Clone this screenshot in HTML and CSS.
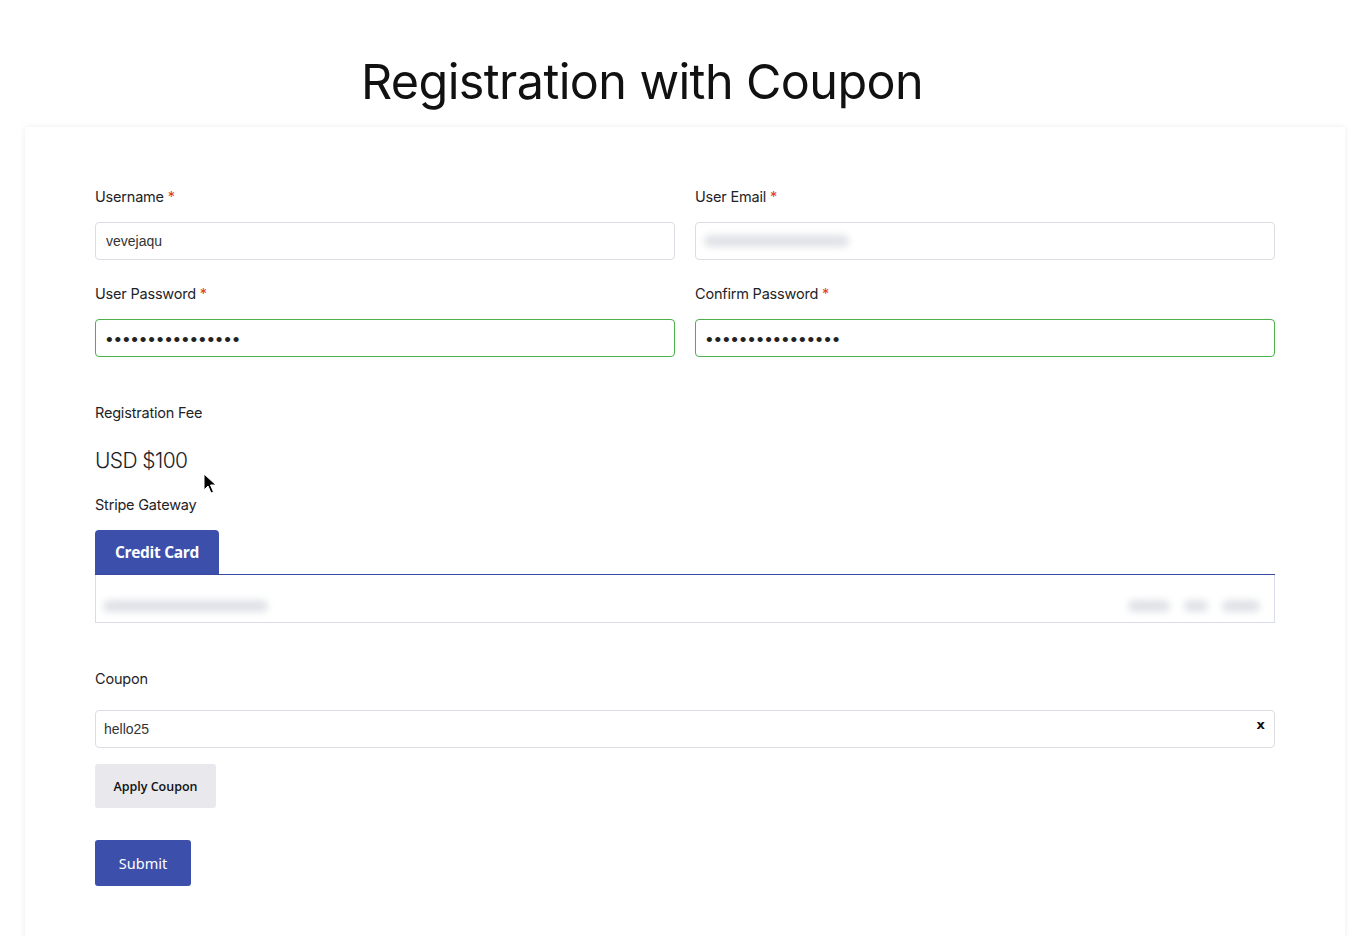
FILE: index.html
```html
<!DOCTYPE html>
<html lang="en">
<head>
  <meta charset="UTF-8">
  <meta name="viewport" content="width=device-width, initial-scale=1.0">
  <title>Registration with Coupon</title>
  <link rel="stylesheet" href="styles.css">
</head>
<body>
  <h1 class="page-title">Registration with Coupon</h1>

  <div class="card">
    <form class="reg-form">
      <div class="row">
        <div class="field">
          <label>Username <span class="req">*</span></label>
          <input type="text" class="input" value="vevejaqu">
        </div>
        <div class="field">
          <label>User Email <span class="req">*</span></label>
          <div class="input blurred-input"><span class="blur blur-email"></span></div>
        </div>
      </div>

      <div class="row">
        <div class="field">
          <label>User Password <span class="req">*</span></label>
          <input type="password" class="input valid" value="passwordpassword">
        </div>
        <div class="field">
          <label>Confirm Password <span class="req">*</span></label>
          <input type="password" class="input valid" value="passwordpassword">
        </div>
      </div>

      <!-- Fee -->
      <div class="fee">
        <div class="fee-label">Registration Fee</div>
        <div class="fee-amount">USD $100</div>
        <div class="gateway-label">Stripe Gateway</div>
      </div>

      <div class="tabs">
        <button type="button" class="tab active">Credit Card</button>
      </div>
      <div class="card-element">
        <span class="blur blur-number"></span>
        <span class="spacer"></span>
        <span class="blur blur-exp"></span>
        <span class="blur blur-cvc"></span>
        <span class="blur blur-zip"></span>
      </div>

      <!-- Coupon -->
      <div class="coupon">
        <label>Coupon</label>
        <div class="coupon-input">
          <input type="text" class="input" value="hello25">
          <span class="clear">x</span>
        </div>
        <button type="button" class="btn-apply">Apply Coupon</button>
      </div>

      <button type="submit" class="btn-submit">Submit</button>
    </form>
  </div>

  <svg class="cursor" width="14" height="22" viewBox="0 0 14 22">
    <path d="M1 1 L1 17 L5 13 L8 20 L10.5 19 L7.5 12 L13 12 Z" fill="#000" stroke="#fff" stroke-width="1"/>
  </svg>
</body>
</html>
```

FILE: styles.css
```css
body {
  font-family: "Inter", "Noto Sans", sans-serif;
  background: #ffffff;
  margin: 0;
  color: #1d2327;
}

.page-title {
  font-weight: 400;
  font-size: 48.5px;
  letter-spacing: -0.6px;
  text-align: center;
  margin: 52px 70px 0 0;
  line-height: 60px;
  color: #111;
}

/* Card */
.card {
  margin: 15px 9px 0 25px;
  padding: 61px 70px 50px 70px;
  background: #fff;
  box-shadow: 0 0 6px rgba(0, 0, 0, 0.08);
  min-height: 700px;
}

.row {
  display: grid;
  grid-template-columns: 1fr 1fr;
  column-gap: 20px;
  margin-bottom: 25px;
}

.field label,
.coupon label {
  display: block;
  font-size: 14.5px;
  color: #1d2327;
  margin-bottom: 17px;
  letter-spacing: -0.2px;
}

.req {
  color: #e2401c;
}

.input {
  box-sizing: border-box;
  width: 100%;
  height: 38px;
  padding: 0 10px;
  border: 1px solid #dcdce3;
  border-radius: 4px;
  font-family: "Liberation Sans", Arial, sans-serif;
  font-size: 14px;
  color: #333;
  background: #fff;
  outline: none;
}

.input.valid {
  border-color: #4cb14c;
  font-size: 19px;
  letter-spacing: 1.8px;
  color: #222;
  padding-top: 3px;
}

.blurred-input {
  display: flex;
  align-items: center;
}

.blur {
  display: inline-block;
  height: 12px;
  border-radius: 6px;
  background: #e0e2e7;
  filter: blur(3.5px);
}

.blur-email {
  width: 145px;
  margin-left: -2px;
}

/* Fee */
.fee {
  margin-top: 47px;
}

.fee-label {
  font-size: 14.5px;
  letter-spacing: -0.2px;
}

.fee-amount {
  font-size: 21px;
  font-weight: 300;
  letter-spacing: -0.6px;
  margin-top: 27px;
}

.gateway-label {
  font-size: 14.5px;
  letter-spacing: -0.2px;
  margin-top: 23px;
}

.tabs {
  margin-top: 17px;
  border-bottom: 1px solid #3a4aa0;
  display: flex;
}

.tab {
  background: #3c4fab;
  color: #fff;
  border: none;
  border-radius: 4px 4px 0 0;
  width: 124px;
  height: 44px;
  font-family: "Open Sans", sans-serif;
  font-weight: 700;
  font-size: 15.5px;
  letter-spacing: -0.3px;
}

.card-element {
  box-sizing: border-box;
  height: 48px;
  border: 1px solid #dadbe8;
  border-top: none;
  display: flex;
  align-items: center;
  padding: 14px 14px 0 7px;
  gap: 14px;
}

.card-element .spacer {
  flex: 1;
}

.blur-number { width: 165px; }
.blur-exp { width: 42px; }
.blur-cvc { width: 24px; }
.blur-zip { width: 38px; }

/* Coupon */
.coupon {
  margin-top: 47px;
}

.coupon label {
  margin-bottom: 23px;
}

.coupon-input {
  position: relative;
}

.coupon-input .input {
  padding: 0 8px;
}

.clear {
  position: absolute;
  right: 10px;
  top: 7px;
  font-family: "DejaVu Sans", sans-serif;
  font-weight: bold;
  font-size: 13px;
  color: #111;
}

.btn-apply {
  margin-top: 16px;
  background: #e8e8ed;
  color: #111;
  border: none;
  border-radius: 3px;
  width: 121px;
  height: 44px;
  font-family: "Open Sans", sans-serif;
  font-size: 12.5px;
  font-weight: 600;
}

.btn-submit {
  display: block;
  margin-top: 32px;
  background: #3c4fab;
  color: #fff;
  border: none;
  border-radius: 3px;
  width: 96px;
  height: 46px;
  font-family: "Noto Sans", sans-serif;
  font-size: 14.5px;
}

.cursor {
  position: absolute;
  left: 203px;
  top: 473px;
}
```
